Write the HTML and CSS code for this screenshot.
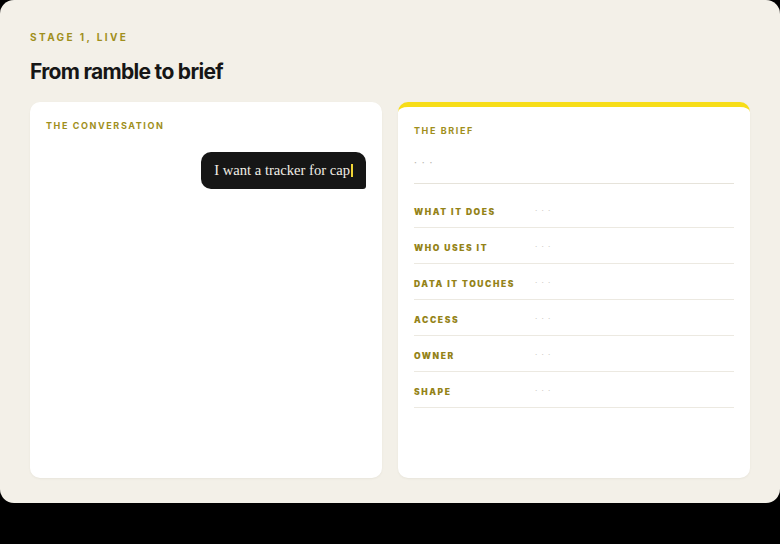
FILE: index.html
```html
<!DOCTYPE html>
<html>
<head>
<meta charset="utf-8">
<link rel="stylesheet" href="styles.css">
</head>
<body>
<div class="frame">
  <div class="eyebrow">STAGE 1, LIVE</div>
  <h1 class="title">From ramble to brief</h1>
  <div class="cards">
    <section class="card convo">
      <div class="card-label">THE CONVERSATION</div>
      <div class="thread">
        <div class="bubble">I want a tracker for cap<span class="caret"></span></div>
      </div>
    </section>
    <section class="card brief">
      <div class="card-label">THE BRIEF</div>
      <div class="summary">· · ·</div>
      <div class="rows">
        <div class="row"><span class="key">WHAT IT DOES</span><span class="val">· · ·</span></div>
        <div class="row"><span class="key">WHO USES IT</span><span class="val">· · ·</span></div>
        <div class="row"><span class="key">DATA IT TOUCHES</span><span class="val">· · ·</span></div>
        <div class="row"><span class="key">ACCESS</span><span class="val">· · ·</span></div>
        <div class="row"><span class="key">OWNER</span><span class="val">· · ·</span></div>
        <div class="row"><span class="key">SHAPE</span><span class="val">· · ·</span></div>
      </div>
    </section>
  </div>
</div>
</body>
</html>
```

FILE: styles.css
```css
* { box-sizing: border-box; }
html, body { margin: 0; padding: 0; background: #000; }
body { width: 780px; height: 544px; overflow: hidden; font-family: Inter, "Liberation Sans", sans-serif; }
.frame {
  width: 780px;
  height: 503px;
  background: #f3f0e8;
  border-radius: 14px;
  padding: 31px 30px 25px;
  display: flex;
  flex-direction: column;
}
.eyebrow {
  font-size: 10px;
  font-weight: 700;
  letter-spacing: 2.4px;
  color: #a08f1c;
  line-height: 12px;
}
.title {
  margin: 16px 0 0;
  font-size: 21px;
  line-height: 26px;
  font-weight: 700;
  letter-spacing: -0.7px;
  color: #161616;
}
.cards {
  margin-top: 17px;
  display: grid;
  grid-template-columns: 1fr 1fr;
  gap: 16px;
  flex: 1;
}
.card {
  background: #fff;
  border-radius: 10px;
  padding: 18px 16px 16px;
  box-shadow: 0 1px 2px rgba(120,110,80,0.08);
}
.card-label {
  font-size: 9px;
  font-weight: 700;
  letter-spacing: 1.6px;
  color: #a08f1c;
  line-height: 11px;
}
.thread {
  margin-top: 21px;
  display: flex;
  justify-content: flex-end;
}
.bubble {
  background: #161616;
  color: #f1eee6;
  font-family: "Liberation Serif", serif;
  font-size: 14.6px;
  line-height: 17px;
  padding: 10px 13px 10px 13px;
  border-radius: 10px 10px 3px 10px;
  display: flex;
  align-items: center;
}
.caret {
  display: inline-block;
  width: 2px;
  height: 13px;
  background: #f1d637;
  margin-left: 1px;
}
.brief {
  border-top: 5px solid #f7dd17;
}
.summary {
  margin-top: 20px;
  color: #b8b5ad;
  font-size: 10px;
  line-height: 12px;
  letter-spacing: 1px;
  padding-bottom: 15px;
  border-bottom: 1px solid #e6e3da;
}
.rows {
  margin-top: 8px;
}
.row {
  display: flex;
  align-items: center;
  height: 36px;
  border-bottom: 1px solid #ece9e1;
  padding-top: 5px;
}
.key {
  width: 121px;
  font-family: Inter, "DejaVu Sans", sans-serif;
  font-weight: 900;
  font-size: 8.5px;
  letter-spacing: 1.6px;
  color: #948318;
}
.val {
  color: #cac7bf;
  font-size: 8px;
  letter-spacing: 1px;
  margin-top: -4px;
}
```
